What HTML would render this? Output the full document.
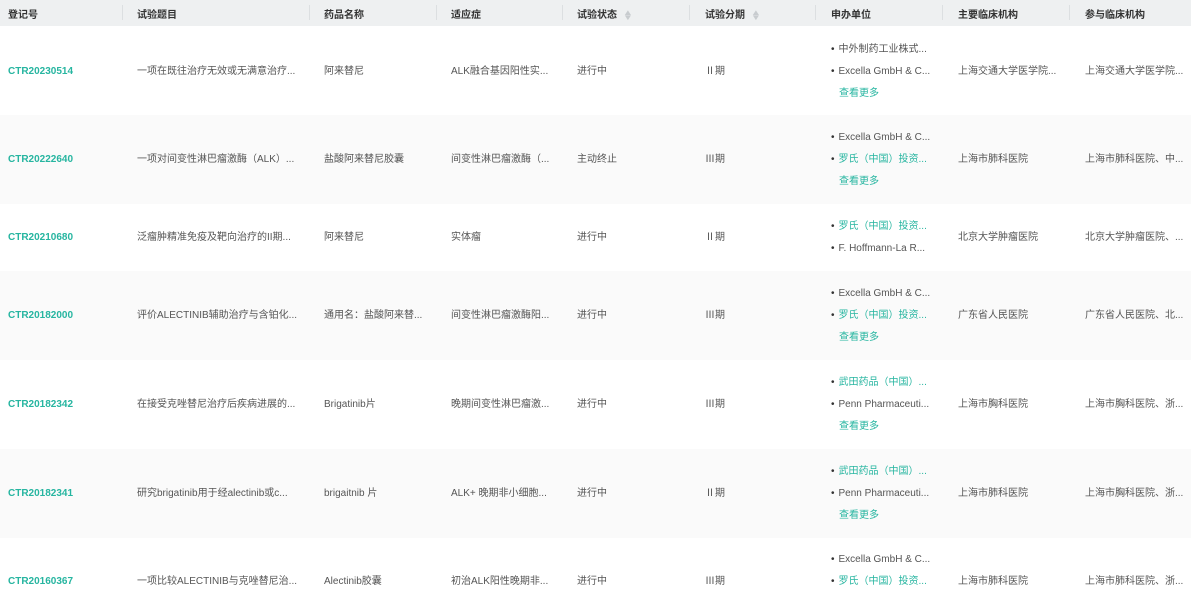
<!DOCTYPE html>
<html><head><meta charset="utf-8"><style>
*{margin:0;padding:0;box-sizing:border-box}
html,body{width:1191px;height:589px;overflow:hidden}
body{background:#fff;font-family:"Liberation Sans","Noto Sans CJK SC",sans-serif;font-size:10px;color:#555;position:relative}
.hd{position:absolute;left:0;top:0;width:1191px;height:26px;background:#eef0f1}
.hd span{position:absolute;top:6px;font-weight:bold;color:#333;font-size:10px}
.sep{position:absolute;top:5px;width:1px;height:15px;background:#dcdfe1}
.row{position:absolute;left:0;width:1191px;overflow:hidden}
.g{background:#fafafa}
.c{position:absolute;white-space:nowrap;line-height:14px}
.id{color:#26b5a0;font-weight:bold}
.gr{color:#26b5a0}
.sp{position:absolute;left:831px;white-space:nowrap;line-height:14px}
.sp div{height:22px}
.sp div:before{content:"•";color:#333;margin-right:4px}
.sp .m{padding-left:8px}
.sp .m:before{content:"";margin:0}
.arr{display:inline-block;margin-left:7px;vertical-align:middle;color:#c8cccf;font-size:8px;line-height:5px;font-weight:normal;transform:scaleX(1.3)}
</style></head><body>
<div class="hd">
<span style="left:8px">登记号</span>
<span style="left:137px">试验题目</span>
<span style="left:324px">药品名称</span>
<span style="left:451px">适应症</span>
<span style="left:577px">试验状态<i class="arr">▲<br>▼</i></span>
<span style="left:705px">试验分期<i class="arr">▲<br>▼</i></span>
<span style="left:831px">申办单位</span>
<span style="left:958px">主要临床机构</span>
<span style="left:1085px">参与临床机构</span>
<div class="sep" style="left:122px"></div><div class="sep" style="left:309px"></div><div class="sep" style="left:436px"></div><div class="sep" style="left:562px"></div><div class="sep" style="left:689px"></div><div class="sep" style="left:815px"></div><div class="sep" style="left:942px"></div><div class="sep" style="left:1069px"></div>
</div>

<div class="row" style="top:26px;height:89px">
<div class="c id" style="left:8px;top:39px">CTR20230514</div>
<div class="c" style="left:137px;top:39px">一项在既往治疗无效或无满意治疗...</div>
<div class="c" style="left:324px;top:39px">阿来替尼</div>
<div class="c" style="left:451px;top:39px">ALK融合基因阳性实...</div>
<div class="c" style="left:577px;top:39px">进行中</div>
<div class="c" style="left:705px;top:39px">Ⅱ期</div>
<div class="sp" style="top:17px"><div>中外制药工业株式...</div><div>Excella GmbH &amp; C...</div><div class="m gr">查看更多</div></div>
<div class="c" style="left:958px;top:39px">上海交通大学医学院...</div>
<div class="c" style="left:1085px;top:39px">上海交通大学医学院...</div>
</div>

<div class="row g" style="top:115px;height:89px">
<div class="c id" style="left:8px;top:38px">CTR20222640</div>
<div class="c" style="left:137px;top:38px">一项对间变性淋巴瘤激酶（ALK）...</div>
<div class="c" style="left:324px;top:38px">盐酸阿来替尼胶囊</div>
<div class="c" style="left:451px;top:38px">间变性淋巴瘤激酶（...</div>
<div class="c" style="left:577px;top:38px">主动终止</div>
<div class="c" style="left:705px;top:38px">Ⅲ期</div>
<div class="sp" style="top:16px"><div>Excella GmbH &amp; C...</div><div class="gr">罗氏（中国）投资...</div><div class="m gr">查看更多</div></div>
<div class="c" style="left:958px;top:38px">上海市肺科医院</div>
<div class="c" style="left:1085px;top:38px">上海市肺科医院、中...</div>
</div>

<div class="row" style="top:204px;height:67px">
<div class="c id" style="left:8px;top:27px">CTR20210680</div>
<div class="c" style="left:137px;top:27px">泛瘤肿精准免疫及靶向治疗的II期...</div>
<div class="c" style="left:324px;top:27px">阿来替尼</div>
<div class="c" style="left:451px;top:27px">实体瘤</div>
<div class="c" style="left:577px;top:27px">进行中</div>
<div class="c" style="left:705px;top:27px">Ⅱ期</div>
<div class="sp" style="top:16px"><div class="gr">罗氏（中国）投资...</div><div>F. Hoffmann-La R...</div></div>
<div class="c" style="left:958px;top:27px">北京大学肿瘤医院</div>
<div class="c" style="left:1085px;top:27px">北京大学肿瘤医院、...</div>
</div>

<div class="row g" style="top:271px;height:89px">
<div class="c id" style="left:8px;top:38px">CTR20182000</div>
<div class="c" style="left:137px;top:38px">评价ALECTINIB辅助治疗与含铂化...</div>
<div class="c" style="left:324px;top:38px">通用名：盐酸阿来替...</div>
<div class="c" style="left:451px;top:38px">间变性淋巴瘤激酶阳...</div>
<div class="c" style="left:577px;top:38px">进行中</div>
<div class="c" style="left:705px;top:38px">Ⅲ期</div>
<div class="sp" style="top:16px"><div>Excella GmbH &amp; C...</div><div class="gr">罗氏（中国）投资...</div><div class="m gr">查看更多</div></div>
<div class="c" style="left:958px;top:38px">广东省人民医院</div>
<div class="c" style="left:1085px;top:38px">广东省人民医院、北...</div>
</div>

<div class="row" style="top:360px;height:89px">
<div class="c id" style="left:8px;top:38px">CTR20182342</div>
<div class="c" style="left:137px;top:38px">在接受克唑替尼治疗后疾病进展的...</div>
<div class="c" style="left:324px;top:38px">Brigatinib片</div>
<div class="c" style="left:451px;top:38px">晚期间变性淋巴瘤激...</div>
<div class="c" style="left:577px;top:38px">进行中</div>
<div class="c" style="left:705px;top:38px">Ⅲ期</div>
<div class="sp" style="top:16px"><div class="gr">武田药品（中国）...</div><div>Penn Pharmaceuti...</div><div class="m gr">查看更多</div></div>
<div class="c" style="left:958px;top:38px">上海市胸科医院</div>
<div class="c" style="left:1085px;top:38px">上海市胸科医院、浙...</div>
</div>

<div class="row g" style="top:449px;height:89px">
<div class="c id" style="left:8px;top:38px">CTR20182341</div>
<div class="c" style="left:137px;top:38px">研究brigatinib用于经alectinib或c...</div>
<div class="c" style="left:324px;top:38px">brigaitnib 片</div>
<div class="c" style="left:451px;top:38px">ALK+ 晚期非小细胞...</div>
<div class="c" style="left:577px;top:38px">进行中</div>
<div class="c" style="left:705px;top:38px">Ⅱ期</div>
<div class="sp" style="top:16px"><div class="gr">武田药品（中国）...</div><div>Penn Pharmaceuti...</div><div class="m gr">查看更多</div></div>
<div class="c" style="left:958px;top:38px">上海市肺科医院</div>
<div class="c" style="left:1085px;top:38px">上海市胸科医院、浙...</div>
</div>

<div class="row" style="top:538px;height:51px">
<div class="c id" style="left:8px;top:37px">CTR20160367</div>
<div class="c" style="left:137px;top:37px">一项比较ALECTINIB与克唑替尼治...</div>
<div class="c" style="left:324px;top:37px">Alectinib胶囊</div>
<div class="c" style="left:451px;top:37px">初治ALK阳性晚期非...</div>
<div class="c" style="left:577px;top:37px">进行中</div>
<div class="c" style="left:705px;top:37px">Ⅲ期</div>
<div class="sp" style="top:15px"><div>Excella GmbH &amp; C...</div><div class="gr">罗氏（中国）投资...</div></div>
<div class="c" style="left:958px;top:37px">上海市肺科医院</div>
<div class="c" style="left:1085px;top:37px">上海市肺科医院、浙...</div>
</div>
</body></html>
